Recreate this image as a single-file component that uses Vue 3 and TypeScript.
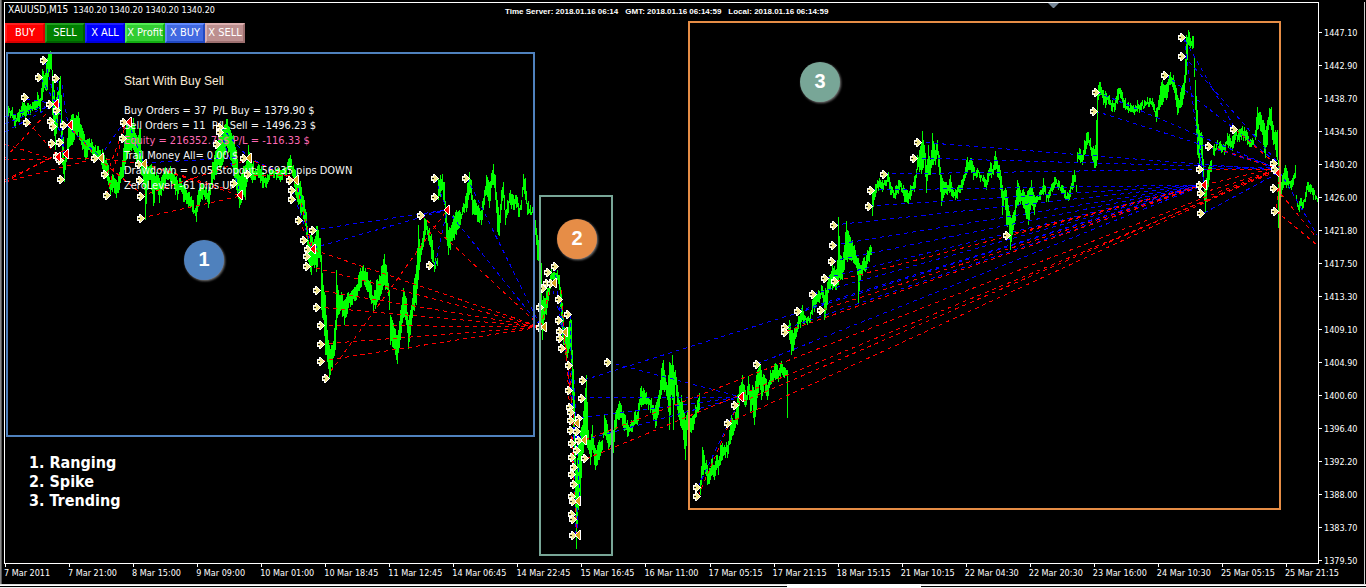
<script setup lang="ts">
type Bar = { x: number; hi: number; lo: number }

const actions = [
  { label: 'BUY', tone: 'red' },
  { label: 'SELL', tone: 'green' },
  { label: 'X ALL', tone: 'blue' },
  { label: 'X Profit', tone: 'lime' },
  { label: 'X BUY', tone: 'royal' },
  { label: 'X SELL', tone: 'rosy' },
]

const prices = [
  '1447.10', '1442.90', '1438.70', '1434.50', '1430.20', '1426.00', '1421.80', '1417.50', '1413.30',
  '1409.10', '1404.90', '1400.60', '1396.40', '1392.20', '1388.00', '1383.70', '1379.50',
]

const times = [
  '7 Mar 2011', '7 Mar 21:00', '8 Mar 15:00', '9 Mar 09:00', '10 Mar 01:00', '10 Mar 18:45', '11 Mar 12:45',
  '14 Mar 06:45', '14 Mar 22:45', '15 Mar 16:45', '16 Mar 11:00', '17 Mar 05:15', '17 Mar 21:15', '18 Mar 15:15',
  '21 Mar 10:15', '22 Mar 04:30', '22 Mar 20:30', '23 Mar 16:00', '24 Mar 10:30', '25 Mar 05:15', '25 Mar 21:15',
]

// Each session is a run of "x high low" knots; bars between knots are interpolated.
const sessions = [
  `8 106 117,12 107 118,15 114 128,18 112 122,22 102 117,26 106 116,30 104 115,34 101 110,37 92 108,40 98 112,42 69 100,44 75 88,
  47 58 90,49 52 72,51 52 70,52 70 115,55 100 150,58 90 115,60 76 110,61 95 140,62 120 165,64 160 182,66 150 162,68 128 150,
  71 115 145,74 118 140,76 115 135,78 112 132,79 118 140,82 128 150,85 140 160,89 138 150,92 142 155,95 145 157,99 150 158,
  103 152 170,106 158 178,108 165 185,110 180 196,113 175 188,116 180 198,119 172 190,122 160 178,124 140 170,126 125 160,
  130 122 150,133 118 150,136 135 165,140 128 165,141 150 175,144 160 190,145 160 220,147 165 190,150 165 180,153 172 206,156 172 190,
  159 178 203,162 175 190,165 167 185,168 170 180,171 168 184,174 172 188,177 180 200,180 178 190,183 185 202,186 190 204,
  189 192 206,192 200 212,195 208 216,196 205 222,197 195 212,199 188 205,202 183 200,205 187 200,208 190 208,210 183 195,
  212 162 185,214 155 180,216 150 175,218 140 165,220 130 170,224 125 155,227 119 148,230 130 160,233 135 170,236 150 190,
  239 175 208,242 170 200,245 165 200,248 145 170,251 160 180,255 168 180,259 165 178,263 172 188,266 178 188,269 170 180,
  273 170 178,277 168 178,281 170 180,285 168 176,290 155 170,293 165 178,295 170 195,298 175 205,301 187 215,304 200 222,
  306 212 235,308 240 262,311 232 275,313 242 265,316 226 272,318 230 258,320 238 262,321 255 310,323 285 320,325 295 355,
  327 330 362,329 345 378,332 345 368,335 320 350,336 270 330,338 290 315,341 292 310,344 300 325,348 292 308,352 290 305,
  356 285 300,360 268 288,363 265 280,366 272 290,370 280 300,373 296 312,376 280 305,379 275 300,382 265 290,384 254 285,
  387 272 290,389 290 310,390 315 345,394 328 350,397 335 364,400 310 340,403 288 318,406 298 325,408 320 349,411 305 325,
  413 285 310,416 265 305,418 225 280,420 248 262,422 238 250,424 218 240,426 220 230,429 228 245,432 240 262,434 262 272,437 258 266`,
  `438 178 200,442 174 190,444 182 205,446 210 240,448 230 255,450 228 250,453 215 238,456 210 235,460 212 225,463 203 212,
  466 193 212,469 172 195,471 180 200,472 195 215,475 200 215,478 205 222,481 210 225,484 190 205,486 175 195,489 182 208,
  492 170 185,493 164 185,495 175 200,497 200 232,499 215 236,501 190 210,503 182 198,505 210 225,507 200 215,510 190 205,
  513 195 210,516 195 208,519 208 217,521 200 210,523 174 190,525 178 200,527 203 215,530 205 215,533 212 218,535 220 235,
  537 235 260,539 245 258`,
  `541 263 325,542 300 340,544 298 320,547 288 308,549 280 295,551 268 285,554 272 282,557 270 280,559 275 290,561 290 325,
  563 315 345,565 330 355,567 335 358,570 315 350,571 320 365,572 350 400,574 390 470,576 470 549,578 440 510,580 430 498,
  582 425 455,584 400 445,586 375 440,588 430 450,590 440 465,592 425 450,594 445 465,595 448 470,597 445 465,599 440 460,
  602 440 450,604 415 435,606 420 440,608 430 450,611 435 448,613 430 453,615 412 430,618 404 420,620 403 418,622 412 425,
  625 415 430,628 425 436,631 420 432,634 412 425,637 412 425,640 388 405,643 388 405,646 392 405,648 397 410,651 398 410,
  653 405 420,655 405 428,658 395 415,661 368 395,663 360 390,665 375 390,667 385 400,669 362 430,671 365 395,672 355 400,
  673 365 430,675 370 385,677 385 410,679 400 420,681 395 428,683 410 440,685 420 460,687 410 430,690 418 432,693 415 430,
  695 405 418,697 400 412,699 393 410`,
  `700 480 495,702 447 475,704 455 470,707 465 485,710 468 480,712 455 475,714 465 480,716 455 470,718 460 475,720 445 465,
  722 443 460,724 445 455,727 445 458,729 430 445,731 415 440,733 420 435,735 412 428,737 395 425,740 385 400,742 375 395,
  744 385 405,746 395 405,748 376 395,750 390 412,752 385 405,754 390 425,757 370 398,759 362 385,761 370 400,764 375 385,
  767 385 400,770 370 385,773 370 382,775 363 380,778 370 382,780 363 378,782 364 375,785 368 376,786 370 376,787 370 418`,
  `788 325 333,789 320 340,791 330 355,794 328 345,797 322 332,800 310 328,802 305 320,804 315 325,807 317 325,810 312 322,
  812 300 315,815 295 308,818 290 302,822 286 298,824 295 320,827 282 305,829 275 290,832 265 290,835 270 290,837 260 285,
  838 217 285,840 255 280,842 260 280,844 245 270,846 221 260,849 235 260,852 240 260,855 250 265,857 258 275,858 258 303,
  860 265 280,863 258 270,866 255 270,869 247 262,871 247 255`,
  `872 190 216,874 190 200,877 180 188,880 180 188,883 183 190,886 180 186,888 172 182,890 182 195,893 190 198,896 185 195,
  899 180 190,901 183 192,904 188 202,907 190 203,910 185 200,913 182 190,915 175 188,917 155 170,919 150 172,922 131 170,
  924 145 160,926 165 193,928 145 175,930 160 175,932 133 165,935 150 165,937 140 155,939 155 175,941 175 206,944 182 195,
  947 185 195,950 175 192,953 190 198,956 190 198,959 185 193,961 180 190,963 175 185,966 160 175,970 158 170,973 165 180,
  976 170 178,979 172 178,983 175 182,986 180 190,988 170 182,990 162 175,993 165 175,995 151 170,998 165 178,1000 170 190,
  1002 185 215,1004 190 200,1006 190 225,1008 205 225,1010 215 250,1012 215 235,1014 210 225,1017 180 205,1020 190 205,
  1022 190 205,1025 195 215,1028 190 225,1031 180 205,1034 195 215,1037 195 202,1040 190 200,1043 178 195,1046 195 202,
  1049 190 198,1052 183 192,1055 177 185,1058 180 190,1061 185 193,1064 190 198,1067 192 200,1069 190 200,1072 175 190,
  1074 170 182,1076 185 192`,
  `1077 152 162,1079 148 160,1082 155 165,1084 140 155,1087 132 145,1090 138 150,1092 148 160,1095 145 168,1097 95 160,
  1098 85 100,1100 82 95,1103 90 105,1106 93 105,1109 95 105,1112 100 112,1115 98 110,1118 88 100,1120 88 98,1123 98 108,
  1127 103 110,1131 105 112,1134 108 115,1137 100 112,1140 103 110,1144 100 108,1149 98 107,1153 102 110,1156 108 122,
  1159 95 110,1161 82 105,1164 85 98,1167 82 98,1170 72 85,1173 75 90,1175 85 100,1177 95 115,1179 100 108,1182 85 105,
  1184 75 95,1186 35 75,1188 30 45,1190 38 48,1193 36 48,1195 80 110,1197 110 155,1199 130 165,1200 133 150,1202 135 165,
  1204 180 200,1205 185 212,1207 170 190,1209 165 180,1211 160 172`,
  `1213 146 155,1216 142 150,1219 142 150,1222 145 152,1225 142 152,1227 133 145,1230 138 150,1233 135 148,1235 130 140,
  1238 130 140,1241 128 140,1244 127 138,1247 132 145,1249 140 147,1252 138 145,1255 130 140,1257 107 130,1259 112 125,
  1261 115 132,1263 120 145,1265 130 158,1267 120 145,1269 108 125,1271 107 130,1273 125 145,1275 130 150,1277 130 160,
  1278 160 228,1280 190 208,1282 175 190,1285 165 185,1288 178 188,1291 180 190,1293 175 185,1295 165 178`,
  `1296 195 200,1298 205 210,1300 198 208,1303 200 208,1305 192 202,1307 182 190,1309 185 192,1312 188 195,1315 195 200,1317 198 202`,
]

function jitter(n: number): number {
  const v = Math.sin(n * 12.9898) * 43758.5453
  return v - Math.floor(v)
}

function expand(source: string): Bar[] {
  const knots = source.split(',').map((part) => {
    const [x, hi, lo] = part.trim().split(/\s+/).map(Number)
    return { x, hi, lo }
  })
  const bars: Bar[] = []
  knots.forEach((knot, i) => {
    bars.push(knot)
    const next = knots[i + 1]
    if (!next) return
    for (let x = knot.x + 1; x < next.x; x++) {
      const t = (x - knot.x) / (next.x - knot.x)
      const hi = knot.hi + (next.hi - knot.hi) * t + jitter(x) * 8 - 3
      const lo = knot.lo + (next.lo - knot.lo) * t - jitter(x + 900) * 8 + 3
      bars.push({ x, hi: Math.round(hi), lo: Math.round(Math.max(lo, hi + 3)) })
    }
  })
  return bars
}

const candlePath = sessions.flatMap(expand).map((b) => `M${b.x + 0.5} ${b.hi}V${b.lo}`).join('')

const linePath = (rows: number[][]) => rows.map(([a, b, c, d]) => `M${a} ${b}L${c} ${d}`).join('')

const buyLines = linePath([
  [5, 117, 45, 106], [5, 124, 52, 105], [5, 132, 56, 104], [26, 99, 56, 104], [45, 61, 56, 104], [41, 78, 56, 104],
  [57, 79, 64, 157], [52, 104, 66, 155], [62, 85, 68, 125], [66, 125, 100, 157], [100, 157, 124, 122], [128, 122, 144, 164],
  [144, 163, 248, 157], [221, 127, 248, 157], [221, 132, 241, 195], [233, 184, 241, 195], [248, 157, 295, 180],
  [296, 180, 313, 250], [292, 190, 313, 250],
  [313, 230, 447, 210], [313, 248, 447, 210], [421, 215, 447, 210], [447, 210, 541, 327], [467, 178, 541, 327],
  [435, 178, 447, 210], [435, 265, 447, 210],
  [541, 327, 551, 283], [555, 267, 562, 335], [560, 300, 576, 440], [551, 283, 564, 330], [570, 315, 576, 535], [574, 380, 580, 500],
  [577, 500, 577, 535], [572, 430, 584, 440],
  [584, 380, 1204, 185], [608, 362, 741, 397], [582, 398, 741, 397], [580, 418, 741, 397], [584, 440, 741, 397], [698, 487, 741, 397],
  [757, 364, 1204, 185], [787, 328, 1204, 185], [798, 311, 1204, 185], [813, 294, 1204, 185], [826, 278, 1204, 185],
  [832, 261, 1204, 185], [833, 245, 1204, 185], [834, 225, 1204, 185], [869, 206, 1204, 185], [871, 190, 1204, 185],
  [884, 174, 1275, 168], [914, 158, 1275, 168], [918, 142, 1275, 170],
  [1097, 92, 1275, 168], [1095, 111, 1275, 168], [1166, 75, 1280, 165], [1184, 38, 1204, 185], [1184, 56, 1280, 165],
  [1185, 40, 1236, 130], [1200, 145, 1204, 185], [1204, 213, 1280, 172], [1209, 146, 1280, 168], [1236, 130, 1280, 168],
  [1280, 172, 1317, 235],
])

const sellLines = linePath([
  [5, 144, 48, 158], [5, 160, 98, 158], [5, 182, 98, 158], [5, 180, 55, 156], [5, 158, 46, 114], [28, 122, 58, 157], [5, 182, 65, 150],
  [98, 158, 144, 164], [98, 158, 144, 196], [107, 195, 126, 122], [107, 174, 126, 122], [141, 218, 241, 196], [141, 196, 247, 160],
  [144, 164, 241, 196], [144, 164, 230, 190], [68, 125, 98, 158], [247, 158, 295, 180], [246, 175, 290, 175],
  [295, 180, 313, 250], [299, 220, 313, 250],
  [314, 250, 541, 327], [308, 266, 541, 327], [317, 290, 541, 327], [317, 307, 541, 327], [321, 325, 541, 327], [321, 344, 541, 327],
  [321, 361, 541, 327], [326, 378, 447, 210], [421, 215, 541, 327],
  [561, 290, 566, 355], [564, 335, 576, 440], [566, 348, 577, 535], [570, 365, 574, 480], [541, 327, 551, 283],
  [585, 440, 1275, 170], [586, 459, 1275, 172], [728, 423, 1275, 170], [735, 405, 1275, 170], [698, 496, 741, 397],
  [836, 281, 1204, 185], [822, 310, 1204, 185], [787, 331, 1204, 185], [1007, 235, 1204, 185],
  [1204, 185, 1275, 168], [1202, 193, 1275, 170], [1200, 169, 1275, 170], [1209, 146, 1275, 168], [1236, 130, 1280, 168],
  [1276, 188, 1317, 238], [1276, 211, 1317, 245], [1280, 172, 1276, 211],
])

const entries = [
  [44, 60], [39, 77], [56, 78], [25, 97], [27, 122], [50, 104], [57, 110], [51, 121], [53, 126], [52, 143], [60, 142], [57, 156], [60, 160],
  [61, 179], [64, 125], [95, 158], [105, 174], [107, 195], [124, 122], [123, 138], [139, 164], [140, 180], [141, 196], [141, 218],
  [220, 127], [220, 132], [217, 144], [244, 158], [248, 174], [234, 183], [290, 180], [292, 190], [292, 199], [299, 220],
  [313, 230], [304, 240], [308, 249], [307, 256], [307, 266], [317, 290], [317, 307], [321, 325], [321, 344], [321, 361], [326, 378],
  [421, 215], [435, 178], [435, 197], [466, 178], [430, 265],
  [555, 266], [548, 272], [547, 283], [551, 283], [543, 288], [540, 307], [540, 327], [559, 299], [568, 314], [559, 320], [560, 331],
  [560, 338], [562, 348], [569, 365], [569, 390], [583, 380], [582, 398], [570, 407], [571, 412], [571, 420], [579, 418], [571, 430],
  [577, 431], [572, 443], [579, 440], [577, 450], [572, 457], [585, 458], [574, 467], [572, 474], [574, 484], [572, 496], [573, 501],
  [572, 514], [573, 519], [573, 535], [608, 362], [697, 487], [697, 496], [728, 423], [735, 405], [757, 364],
  [785, 327], [785, 332], [798, 311], [813, 294], [821, 310], [825, 278], [835, 281], [832, 261], [833, 245], [834, 225],
  [869, 206], [871, 190], [884, 174], [914, 158], [918, 142], [1007, 235], [1094, 111], [1096, 92], [1165, 75], [1182, 37], [1182, 56],
  [1209, 146], [1234, 129], [1200, 169], [1200, 185], [1201, 193], [1201, 213], [1274, 163], [1275, 169], [1274, 188], [1275, 211],
]

const exits = [
  [56, 104, 1], [58, 157, 1], [66, 154, 1], [70, 125, 1], [101, 158, 0], [129, 122, 1], [144, 164, 0], [249, 158, 0], [240, 195, 1],
  [296, 180, 0], [313, 249, 1], [447, 210, 1], [544, 327, 0], [554, 283, 0], [565, 332, 0], [577, 423, 0], [584, 440, 0], [578, 501, 0],
  [578, 535, 0], [741, 397, 1], [1204, 185, 1], [1278, 173, 1],
]

const zones = [
  { n: 1, x: 7, y: 53, w: 527, h: 383, cx: 204, cy: 260, color: '#4f81bd', frame: '#4f81bd' },
  { n: 2, x: 540, y: 196, w: 72, h: 359, cx: 577, cy: 239, color: '#e68d46', frame: '#78a697' },
  { n: 3, x: 689, y: 22, w: 591, h: 487, cx: 820, cy: 82, color: '#78a697', frame: '#e68d46' },
]
</script>

<template>
  <main class="terminal">
    <section class="plot">
      <svg class="layer" viewBox="5 3 1313 560" preserveAspectRatio="none" aria-hidden="true">
        <path :d="candlePath" class="candles" />
        <path :d="buyLines" class="trade buy" />
        <path :d="sellLines" class="trade sell" />
      </svg>

      <div class="overlay">
        <header class="top">
          <p class="symbol"><b>XAUUSD,M15</b>&nbsp; 1340.20 1340.20 1340.20 1340.20</p>
          <p class="clock"><span>Time Server: 2018.01.16 06:14</span><span>GMT: 2018.01.16 06:14:59</span><span>Local: 2018.01.16 06:14:59</span></p>
        </header>
        <nav class="actions">
          <button v-for="a in actions" :key="a.label" type="button" :class="a.tone">{{ a.label }}</button>
        </nav>
        <div class="info">
          <h1>Start With Buy Sell</h1>
          <p>Buy Orders = 37 &nbsp;P/L Buy = 1379.90 $</p>
          <p>Sell Orders = 11 &nbsp;P/L Sell = -1496.23 $</p>
          <p class="equity">Equity = 216352.75$ P/L = -116.33 $</p>
          <p>Trail Money All= 0.00 $</p>
          <p>Drawdown = 0.05 Stopout: 56935 pips DOWN</p>
          <p>ZeroLevel: -61 pips UP</p>
        </div>
        <ol class="legend">
          <li>1. Ranging</li>
          <li>2. Spike</li>
          <li>3. Trending</li>
        </ol>
      </div>

      <svg class="layer marks" viewBox="5 3 1313 560" preserveAspectRatio="none" role="img" aria-label="Trades and market phases">
        <defs>
          <g id="entry">
            <path d="M-4-2h2v-2h2v1h1v1h1v1h1v1h1v1h-1v1h-1v1h-1v1h-1v1h-2v-2h-2z" fill="#fff" />
            <path d="M-3-1h2v-2h1v1h1v1h1v1h1v1h-1v1h-1v1h-1v1h-1v-2h-2z" fill="#f0e68c" />
            <path d="M-3 0h2v1h-2z" fill="#222" />
          </g>
          <g id="exit-red">
            <path d="M-4 0h1v-1h1v-1h1v-1h1v-1h1v-1h2v10h-2v-1h-1v-1h-1v-1h-1v-1h-1v-1h-1z" fill="#fff" />
            <path d="M-3 0h1v-1h1v-1h1v-1h1v-1h1v8h-1v-1h-1v-1h-1v-1h-1v-1h-1z" fill="#f00" />
          </g>
          <g id="exit-gold">
            <path d="M-4 0h1v-1h1v-1h1v-1h1v-1h1v-1h2v10h-2v-1h-1v-1h-1v-1h-1v-1h-1v-1h-1z" fill="#fff" />
            <path d="M-3 0h1v-1h1v-1h1v-1h1v-1h1v8h-1v-1h-1v-1h-1v-1h-1v-1h-1z" fill="#daa520" />
          </g>
          <filter id="drop" x="-20%" y="-20%" width="150%" height="150%">
            <feDropShadow dx="1" dy="1" stdDeviation="1" flood-color="#999" flood-opacity="0.8" />
          </filter>
        </defs>
        <g shape-rendering="crispEdges">
          <use v-for="([x, y], i) in entries" :key="'n' + i" href="#entry" :x="x" :y="y" />
          <use v-for="([x, y, red], i) in exits" :key="'x' + i" :href="red ? '#exit-red' : '#exit-gold'" :x="x" :y="y" />
        </g>
        <g v-for="z in zones" :key="z.n">
          <rect :x="z.x" :y="z.y" :width="z.w" :height="z.h" fill="none" :stroke="z.frame" stroke-width="2" />
          <circle :cx="z.cx" :cy="z.cy" r="20" :fill="z.color" filter="url(#drop)" />
          <text :x="z.cx" :y="z.cy + 6" class="badge">{{ z.n }}</text>
        </g>
        <path d="M1048 3h11l-5 5h-1z" fill="#778899" />
      </svg>
    </section>

    <aside class="prices">
      <span v-for="p in prices" :key="p">{{ p }}</span>
    </aside>

    <footer class="times">
      <span v-for="t in times" :key="t">{{ t }}</span>
    </footer>
    <div class="tabs"><i></i></div>
  </main>
</template>

<style>
body {
  margin: 0;
  background: #000;
}
</style>

<style scoped>
.terminal {
  box-sizing: border-box;
  min-height: 100vh;
  display: grid;
  grid-template-columns: minmax(0, 1fr) 47px;
  grid-template-rows: minmax(562px, 1fr) 20px 4px;
  padding: 2px 0 0 4px;
  background: linear-gradient(90deg, #8a8a8a 1px, #555 1px, #555 2px, #000 2px);
  color: #fff;
  font: 9px/12px "DejaVu Sans Condensed", "DejaVu Sans", sans-serif;
}
p, h1, ol { margin: 0; padding: 0; font-weight: normal; list-style: none; }
.plot {
  position: relative;
  border: 1px solid #fff;
}
.layer {
  position: absolute;
  inset: 0;
  width: 100%;
  height: 100%;
}
.marks { pointer-events: none; }
.candles { stroke: #0f0; stroke-width: 1; shape-rendering: crispEdges; }
.trade { fill: none; stroke-width: 1; stroke-dasharray: 4 4; shape-rendering: crispEdges; }
.buy { stroke: #00f; }
.sell { stroke: #f00; }
.badge {
  fill: #fff;
  font: bold 20px "Liberation Sans", sans-serif;
  text-anchor: middle;
}
.overlay {
  position: absolute;
  inset: 0;
  display: flex;
  flex-direction: column;
  align-items: flex-start;
}
.top { display: flex; height: 20px; white-space: nowrap; }
.symbol { width: 497px; padding: 1px 0 0 3px; }
.symbol b { font-size: 10px; font-weight: normal; }
.clock {
  display: flex;
  gap: 7px;
  padding-top: 3px;
  font: bold 8px/12px "Liberation Sans", sans-serif;
}
.actions { display: flex; }
.actions button {
  box-sizing: border-box;
  width: 40px;
  height: 20px;
  padding: 0;
  border-style: solid;
  border-width: 2px;
  color: #fff;
  font: 11px/14px "DejaVu Sans Condensed", "DejaVu Sans", sans-serif;
  white-space: nowrap;
  display: flex;
  align-items: center;
  justify-content: center;
}
.actions .red { background: #f00; border-color: #ff2020 #d80000 #d80000 #ff2020; }
.actions .green { background: #008000; border-color: #20a020 #006000 #006000 #20a020; }
.actions .blue { background: #00f; border-color: #2020ff #0000d8 #0000d8 #2020ff; }
.actions .lime { background: #32cd32; border-color: #52ed52 #12ad12 #12ad12 #52ed52; }
.actions .royal { background: #4169e1; border-color: #6189ff #2149c1 #2149c1 #6189ff; }
.actions .rosy { background: #bc8f8f; border-color: #dcafaf #9c6f6f #9c6f6f #dcafaf; }
.info {
  padding: 31px 0 0 119px;
  font: 11px/15px "DejaVu Sans Condensed", "DejaVu Sans", sans-serif;
  color: #f5f5f5;
  white-space: nowrap;
}
.info h1 {
  margin-bottom: 14px;
  font: 12px/15px "Liberation Sans", sans-serif;
  color: #faebd7;
}
.info .equity { color: #ff69b4; }
.legend {
  margin: auto 0 53px 24px;
  font: bold 16px/19px "DejaVu Sans Condensed", "DejaVu Sans", sans-serif;
}
.prices {
  grid-row: 1 / 3;
  grid-column: 2;
  display: flex;
  flex-direction: column;
  padding: 14px 0 7px;
  border-right: 1px solid #ccc;
  margin-right: 1px;
}
.prices span {
  flex: 1;
  display: flex;
  align-items: center;
}
.prices span::before {
  content: "";
  width: 3px;
  height: 1px;
  margin-right: 2px;
  background: #fff;
}
.times {
  grid-row: 2;
  grid-column: 1 / 3;
  display: grid;
  grid-template-columns: repeat(21, minmax(0, 1fr));
  padding-right: 17px;
  white-space: nowrap;
}
.times span::before {
  content: "";
  display: block;
  width: 1px;
  height: 3px;
  margin: 0 0 0 1px;
  background: #fff;
}
.tabs {
  grid-row: 3;
  grid-column: 1 / 3;
  margin-left: -4px;
  background: linear-gradient(#ddd 1px, #fff 1px, #fff 2px, #000 2px, #000 3px, #eee 3px);
}
.tabs i {
  display: block;
  width: 134px;
  height: 4px;
  margin-left: 787px;
  background: #fff;
}
</style>
